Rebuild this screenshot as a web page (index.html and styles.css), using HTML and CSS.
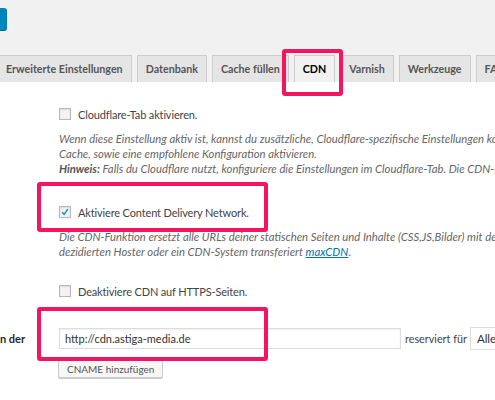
FILE: index.html
```html
<!DOCTYPE html>
<html lang="de">
<head>
  <meta charset="UTF-8" />
  <title>CDN Einstellungen</title>
  <link rel="stylesheet" href="styles.css">
</head>
<body>
  <div class="page">
    <header class="top">
      <div class="save"></div>
      <nav class="tabs">
        <a class="tab" href="#">Erweiterte Einstellungen</a>
        <a class="tab" href="#">Datenbank</a>
        <a class="tab" href="#">Cache füllen</a>
        <a class="tab active" href="#">CDN</a>
        <a class="tab" href="#">Varnish</a>
        <a class="tab" href="#">Werkzeuge</a>
        <a class="tab" href="#">FAQ</a>
      </nav>
    </header>

    <main class="content">
      <div class="row row-cf">
        <div class="label"></div>
        <div class="field">
          <label class="check"><span class="box"></span>Cloudflare-Tab aktivieren.</label>
          <p class="desc">Wenn diese Einstellung aktiv ist, kannst du zusätzliche, Cloudflare-spezifische Einstellungen konfigurieren, wie das Leeren des<br>
          Cache, sowie eine empfohlene Konfiguration aktivieren.<br>
          <b>Hinweis:</b> Falls du Cloudflare nutzt, konfiguriere die Einstellungen im Cloudflare-Tab. Die CDN-Einstellungen gelten nicht für Cloudflare.</p>
        </div>
      </div>

      <div class="row row-cdn">
        <div class="label"></div>
        <div class="field">
          <label class="check"><span class="box checked"><svg viewBox="0 0 12 12" width="10" height="10"><path d="M2.6 6.2 L5 8.8 L9.4 2.6" fill="none" stroke="#1e8cbe" stroke-width="1.8"/></svg></span>Aktiviere Content Delivery Network.</label>
          <p class="desc">Die CDN-Funktion ersetzt alle URLs deiner statischen Seiten und Inhalte (CSS,JS,Bilder) mit der<br>
          dezidierten Hoster oder ein CDN-System transferiert <a href="#">maxCDN</a>.</p>
        </div>
      </div>

      <div class="row row-https">
        <div class="label"></div>
        <div class="field">
          <label class="check"><span class="box"></span>Deaktiviere CDN auf HTTPS-Seiten.</label>
        </div>
      </div>

      <div class="row row-cname">
        <div class="label"><span>Ersetze die Seiten-URL durch die CNAMEs von der</span></div>
        <div class="field">
          <div class="cname-line">
            <input class="url" type="text" value="http://cdn.astiga-media.de">
            <span class="for">reserviert für</span>
            <span class="select">Alle Dateien</span>
          </div>
          <button class="add" type="button">CNAME hinzufügen</button>
        </div>
      </div>
    </main>

    <div class="mark mark-tab"></div>
    <div class="mark mark-cdn"></div>
    <div class="mark mark-cname"></div>
  </div>
</body>
</html>
```

FILE: styles.css
```css
body {
  margin: 0;
  font-family: Lato, 'Open Sans', sans-serif;
  font-size: 11px;
  color: #444;
  background: #fff;
  overflow: hidden;
}

.page {
  position: relative;
  width: 495px;
  height: 400px;
  overflow: hidden;
}

.top {
  background: #f1f1f1;
  height: 82px;
  padding-top: 8px;
  box-sizing: border-box;
}

.save {
  width: 7px;
  height: 22px;
  background: #0085ba;
  border-radius: 0 3px 3px 0;
  box-shadow: 0 1px 0 #006799;
}

.tabs {
  display: flex;
  gap: 5px;
  margin: 25px 0 0 -3px;
  white-space: nowrap;
}

.tab {
  display: block;
  height: 27px;
  line-height: 26px;
  padding: 0 8px;
  box-sizing: border-box;
  background: #e5e5e5;
  border: 1px solid #ccc;
  border-bottom: none;
  color: #555;
  font-weight: 700;
  font-size: 10.7px;
  text-decoration: none;
}

.tab.active {
  background: #f1f1f1;
  color: #000;
}

.content {
  padding-top: 26px;
}

.row {
  display: grid;
  grid-template-columns: 59px 1fr;
}

.label {
  display: flex;
  justify-content: flex-end;
  overflow: hidden;
  white-space: nowrap;
  padding-right: 34px;
  font-weight: 700;
  color: #23282d;
}

.field {
  white-space: nowrap;
}

.check {
  display: flex;
  align-items: center;
  gap: 7px;
  height: 12px;
  color: #444;
  letter-spacing: -0.15px;
}

.box {
  width: 12px;
  height: 12px;
  box-sizing: border-box;
  border: 1px solid #b4b9be;
  background: #f3f3f3;
  box-shadow: inset 0 1px 2px rgba(0,0,0,0.1);
  display: flex;
  align-items: center;
  justify-content: center;
}

.desc {
  margin: 0;
  font-style: italic;
  font-size: 11.3px;
  color: #666;
  line-height: 15px;
}

.desc b {
  color: #555;
}

.desc a {
  color: #0073aa;
  line-height: 15px;
}

.row-cf .desc {
  margin-top: 11px;
}

.row-cdn {
  margin-top: 30px;
}

.row-cdn .desc {
  margin-top: 11px;
}

.row-https {
  margin-top: 26px;
}

.row-cname {
  margin-top: 31px;
}

.row-cname .label {
  line-height: 21px;
}

.cname-line {
  display: flex;
  align-items: center;
  height: 21px;
}

.url {
  width: 342px;
  height: 21px;
  box-sizing: border-box;
  margin: 0 4px 0 0;
  padding: 0 5px;
  border: 1px solid #ddd;
  box-shadow: inset 0 1px 2px rgba(0,0,0,0.07);
  font-family: inherit;
  font-size: 11px;
  color: #333;
}

.for {
  font-size: 10.8px;
}

.select {
  height: 23px;
  line-height: 21px;
  padding: 0 6px;
  box-sizing: border-box;
  border: 1px solid #ddd;
  color: #333;
  font-size: 11.5px;
  margin-left: 3px;
}

.add {
  display: block;
  margin: 11px 0 0 -1px;
  height: 18px;
  padding: 0 8px;
  font-family: inherit;
  font-size: 10px;
  color: #555;
  background: #f7f7f7;
  border: 1px solid #ccc;
  border-radius: 2px;
  box-shadow: 0 1px 0 #ccc;
}

.mark {
  position: absolute;
  border: 4px solid #f5145f;
  border-radius: 3px;
  box-sizing: border-box;
}

.mark-tab {
  left: 282px;
  top: 49px;
  width: 61px;
  height: 47px;
}

.mark-cdn {
  left: 37px;
  top: 182px;
  width: 231px;
  height: 50px;
}

.mark-cname {
  left: 37px;
  top: 307px;
  width: 231px;
  height: 54px;
}
```
